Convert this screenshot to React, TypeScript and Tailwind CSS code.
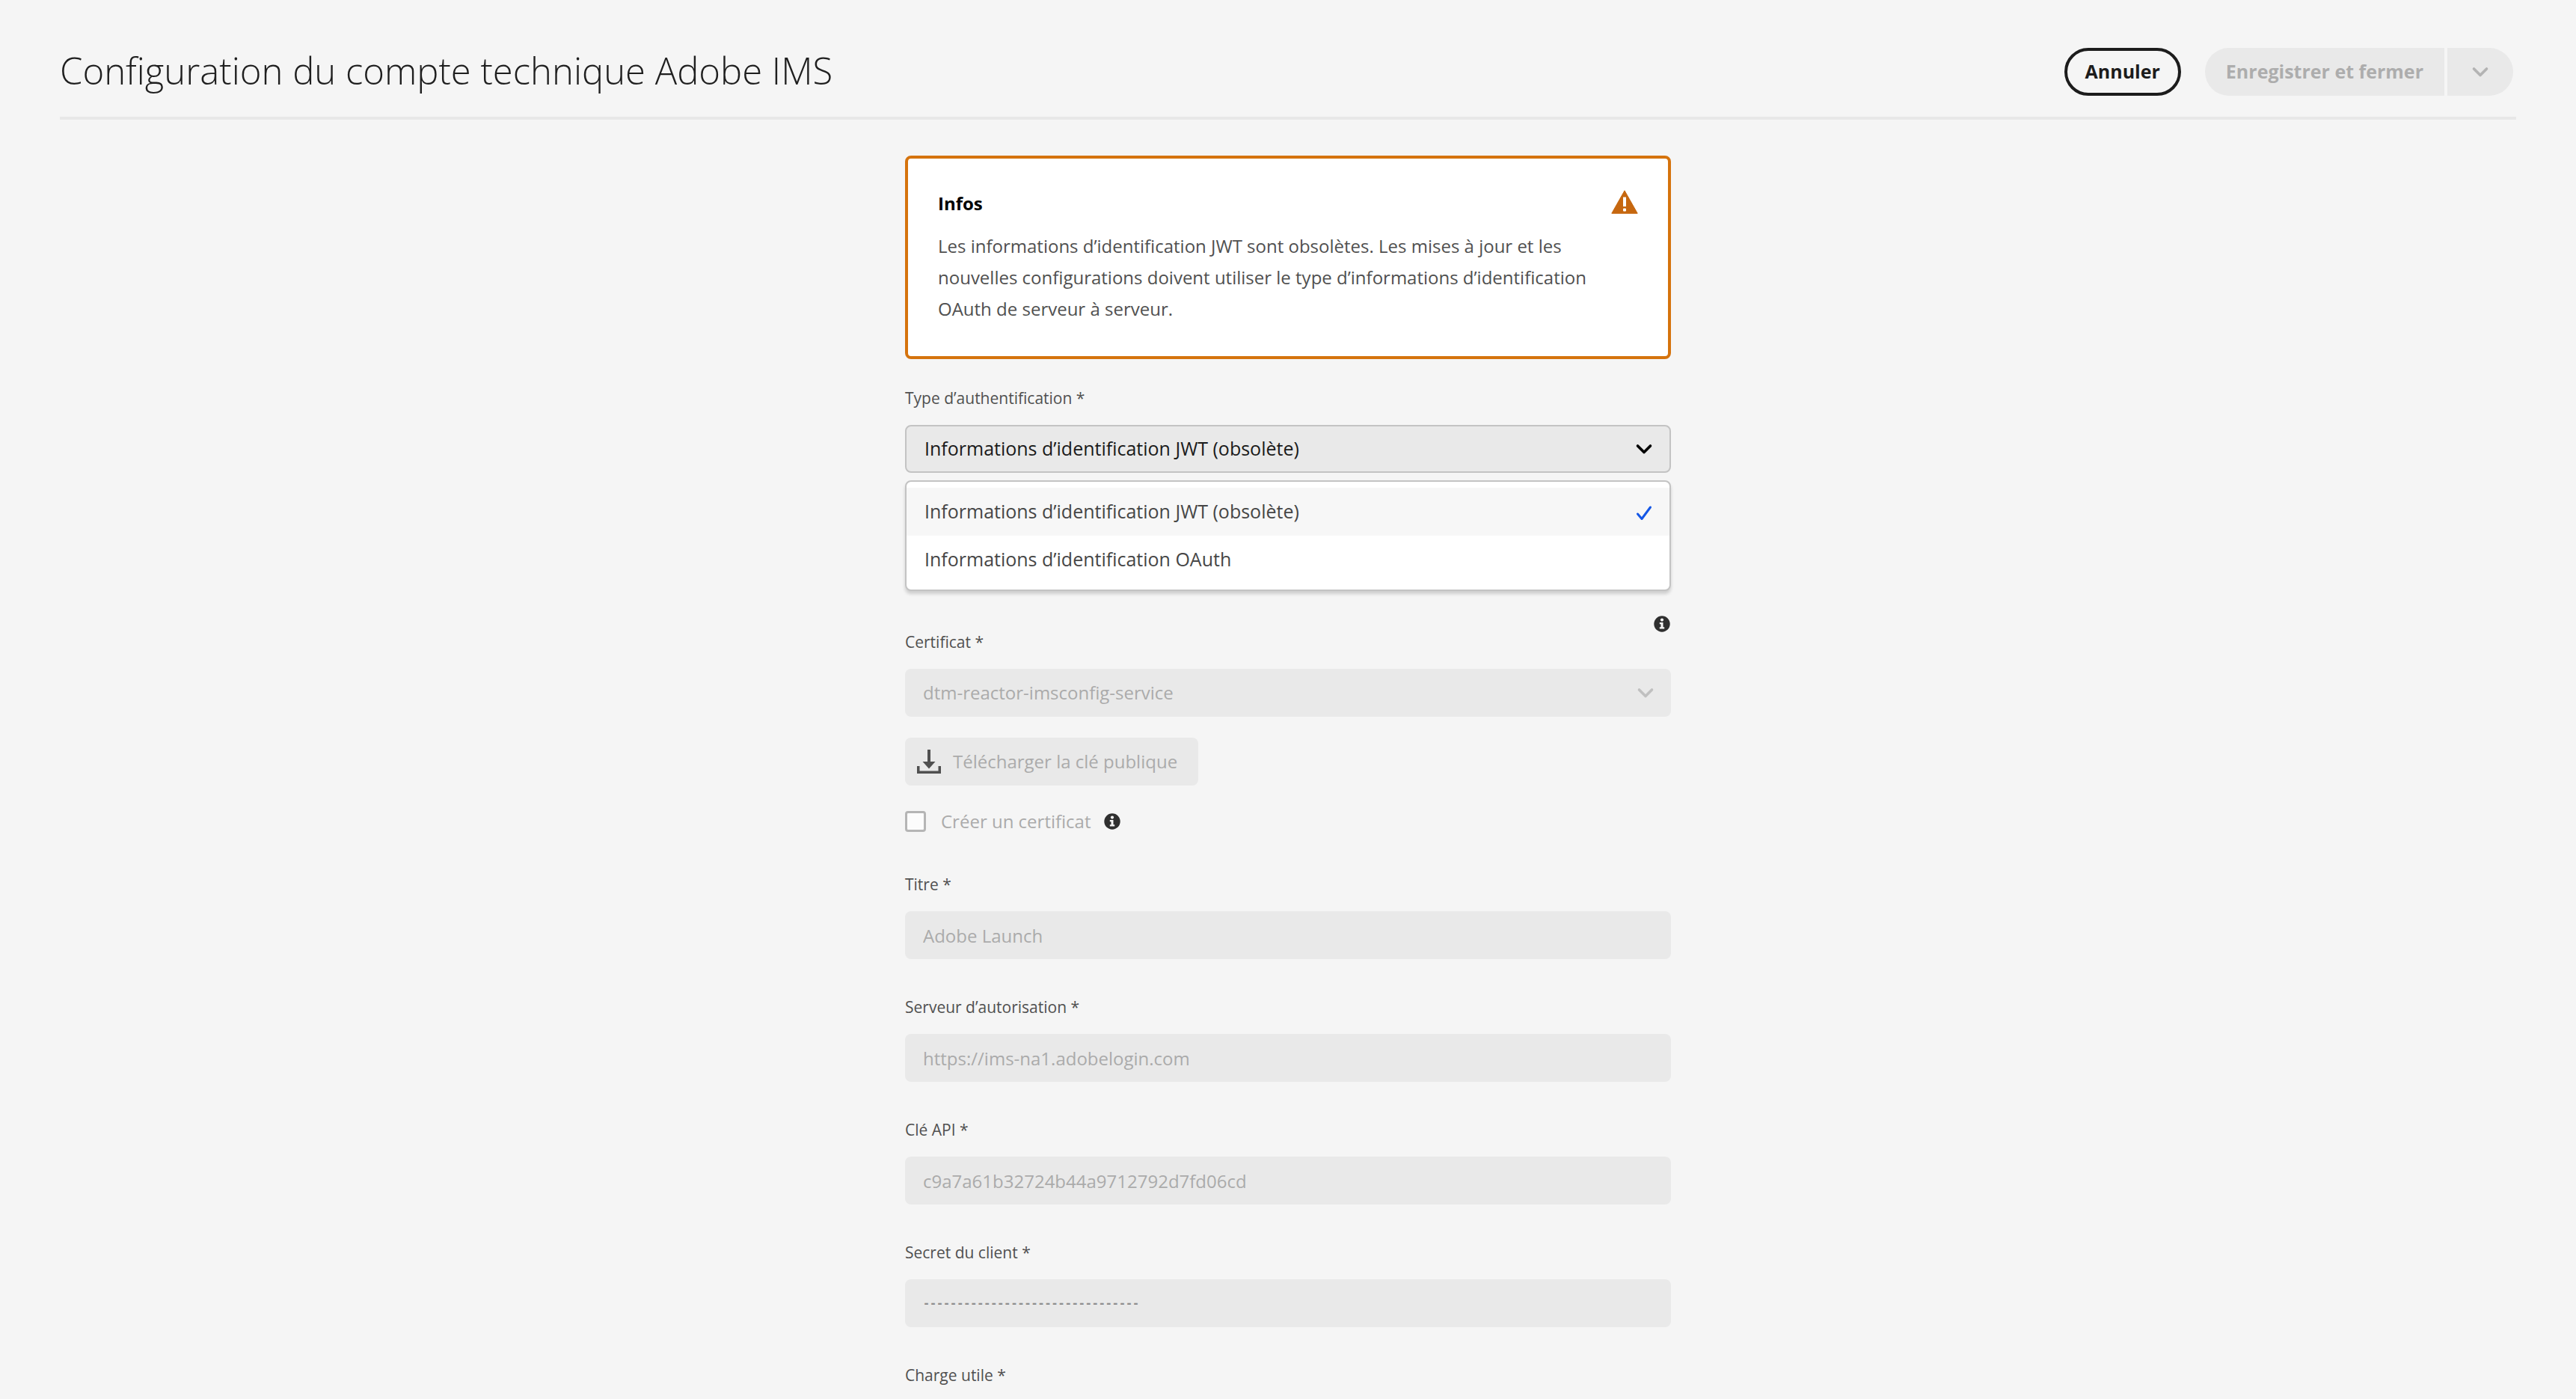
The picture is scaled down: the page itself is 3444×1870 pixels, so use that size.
import React, { useState } from "react";

const OPTIONS = ["Informations d’identification JWT (obsolète)", "Informations d’identification OAuth"];

const FIELDS = [
  { id: "title", label: "Titre *", value: "Adobe Launch", style: "text-[24px] text-[#ababab]" },
  { id: "server", label: "Serveur d’autorisation *", value: "https://ims-na1.adobelogin.com", style: "text-[24px] text-[#ababab]" },
  { id: "api-key", label: "Clé API *", value: "c9a7a61b32724b44a9712792d7fd06cd", style: "text-[24px] text-[#ababab]" },
  { id: "secret", label: "Secret du client *", value: "--------------------------------", style: "font-['DejaVu_Sans_Mono',monospace] text-[15px] font-bold text-[#8f8f8f]" },
];

const LABEL = "block text-[21px] leading-8 text-[#505050]";

function Chevron({ className }: { className: string }) {
  return (
    <svg viewBox="0 0 28 28" className={`size-7 ${className}`} fill="none" stroke="currentColor" strokeWidth="3.6" strokeLinecap="round" strokeLinejoin="round" aria-hidden="true">
      <path d="M5.5 10 14 18.5 22.5 10" />
    </svg>
  );
}

function InfoIcon() {
  return (
    <svg viewBox="0 0 24 24" className="size-6 shrink-0" aria-hidden="true">
      <circle cx="12" cy="12" r="10.7" fill="#2f2f2f" />
      <circle cx="12" cy="6.6" r="2.1" fill="#f5f5f5" />
      <path d="M8.8 10h4.7v6.2h1.7v2.3H8.8v-2.3h1.7v-3.9H8.8z" fill="#f5f5f5" />
    </svg>
  );
}

function WarningIcon() {
  return (
    <svg viewBox="0 0 36 32" className="h-8 w-9 shrink-0" role="img" aria-label="Avertissement">
      <path d="M18 0.8 35.2 31.2H0.8z" fill="#c6670f" stroke="#c6670f" strokeWidth="1" strokeLinejoin="round" />
      <path d="M16 9.5h4v12.5h-4z" fill="#fff" />
      <rect x="16" y="24.5" width="4" height="4" rx="1" fill="#fff" />
    </svg>
  );
}

function DownloadIcon() {
  return (
    <svg viewBox="0 0 32 32" className="size-8 shrink-0" fill="#505050" aria-hidden="true">
      <path d="M14 0h4v16h6.5L16 25.5 7.5 16H14z" />
      <path d="M0 22h3.5v6.5h25V22H32v10H0z" />
    </svg>
  );
}

function CheckIcon() {
  return (
    <svg viewBox="0 0 28 28" className="size-7 text-[#1557e6]" fill="none" stroke="currentColor" strokeWidth="3" strokeLinecap="round" strokeLinejoin="round" aria-hidden="true">
      <path d="M5.5 17 11 23.5 22.5 8" />
    </svg>
  );
}

export default function App() {
  const [selected, setSelected] = useState(0);

  return (
    <div className="h-screen overflow-hidden bg-[#f5f5f5] font-['Open_Sans',sans-serif]">
      <header className="mx-20 flex items-start justify-between border-b-4 border-[#e8e8e8] pt-16 pr-1 pb-7">
        <h1 className="text-[49px] leading-[60px] font-light text-[#1f1f1f]">Configuration du compte technique Adobe IMS</h1>
        <div className="flex gap-8 text-[25px] font-bold">
          <button type="button" className="h-16 rounded-full border-4 border-[#1c1c1c] px-6 text-[#1c1c1c]">Annuler</button>
          <div className="flex gap-1 text-[#adadad]">
            <button type="button" disabled className="h-16 rounded-l-full bg-[#e9e9e9] px-7">Enregistrer et fermer</button>
            <button type="button" disabled aria-label="Autres actions" className="flex h-16 w-22 items-center justify-center rounded-r-full bg-[#e9e9e9]">
              <Chevron className="text-[#b3b3b3]" />
            </button>
          </div>
        </div>
      </header>

      <main className="mx-auto max-w-5xl pt-12">
        <section className="rounded-lg border-4 border-[#d5730d] bg-white px-10 py-[42px]">
          <div className="flex items-start justify-between">
            <h2 className="pt-0.5 text-[24px] leading-8 font-bold text-black">Infos</h2>
            <WarningIcon />
          </div>
          <p className="mt-5 text-[24px] leading-[42px] text-[#505050]">
            Les informations d’identification JWT sont obsolètes. Les mises à jour et les nouvelles configurations doivent utiliser le type d’informations d’identification OAuth de serveur à serveur.
          </p>
        </section>

        <div className="mt-9">
          <label id="auth-label" htmlFor="auth-type" className={`${LABEL} mb-5`}>Type d’authentification *</label>
          <div className="relative">
            <button id="auth-type" type="button" aria-haspopup="listbox" aria-expanded="true" className="flex h-16 w-full items-center justify-between rounded-lg border-2 border-[#c3c3c3] bg-[#e9e9e9] pr-5 pl-6 text-[25px] text-[#1a1a1a]">
              {OPTIONS[selected]}
              <Chevron className="text-black" />
            </button>
            <ul role="listbox" aria-labelledby="auth-label" className="absolute inset-x-0 top-full mt-2.5 rounded-lg border-2 border-[#c3c3c3] bg-white py-2 shadow-[0_4px_4px_rgba(0,0,0,0.16)]">
              {OPTIONS.map((option, index) => (
                <li
                  key={option}
                  role="option"
                  aria-selected={index === selected}
                  onClick={() => setSelected(index)}
                  className={`flex h-16 items-center justify-between pr-5 pl-6 text-[25px] text-[#464646] ${index === selected ? "bg-[#f7f7f7]" : ""}`}
                >
                  {option}
                  {index === selected && <CheckIcon />}
                </li>
              ))}
            </ul>
          </div>
        </div>

        <div className="mt-[190px]">
          <div className="mb-5 flex items-start justify-between">
            <label htmlFor="certificate" className={`${LABEL} pt-5`}>Certificat *</label>
            <InfoIcon />
          </div>
          <div className="relative">
            <select id="certificate" disabled className="h-16 w-full appearance-none rounded-lg bg-[#e9e9e9] px-6 text-[24px] text-[#ababab] opacity-100">
              <option>dtm-reactor-imsconfig-service</option>
            </select>
            <span className="pointer-events-none absolute inset-y-0 right-5 flex items-center">
              <Chevron className="text-[#c0c0c0]" />
            </span>
          </div>
        </div>

        <button type="button" disabled className="mt-7 flex h-16 items-center gap-4 rounded-lg bg-[#e9e9e9] pr-7 pl-4 text-[24px] text-[#ababab]">
          <DownloadIcon />
          Télécharger la clé publique
        </button>

        <div className="mt-8 mb-13 flex h-8 items-center gap-4">
          <label className="flex items-center gap-5 text-[24px] leading-8 text-[#ababab]">
            <input type="checkbox" disabled className="size-7 appearance-none rounded border-3 border-[#b5b5b5] bg-[#fcfcfc]" />
            Créer un certificat
          </label>
          <InfoIcon />
        </div>

        <div className="flex flex-col gap-12">
          {FIELDS.map((field) => (
            <div key={field.id}>
              <label htmlFor={field.id} className={`${LABEL} mb-5`}>{field.label}</label>
              <input id={field.id} type="text" disabled value={field.value} className={`block h-16 w-full rounded-lg bg-[#e9e9e9] px-6 ${field.style}`} />
            </div>
          ))}
          <div>
            <label htmlFor="payload" className={`${LABEL} mb-5`}>Charge utile *</label>
            <textarea id="payload" disabled className="block h-40 w-full rounded-lg bg-[#e9e9e9] px-6" />
          </div>
        </div>
      </main>
    </div>
  );
}
